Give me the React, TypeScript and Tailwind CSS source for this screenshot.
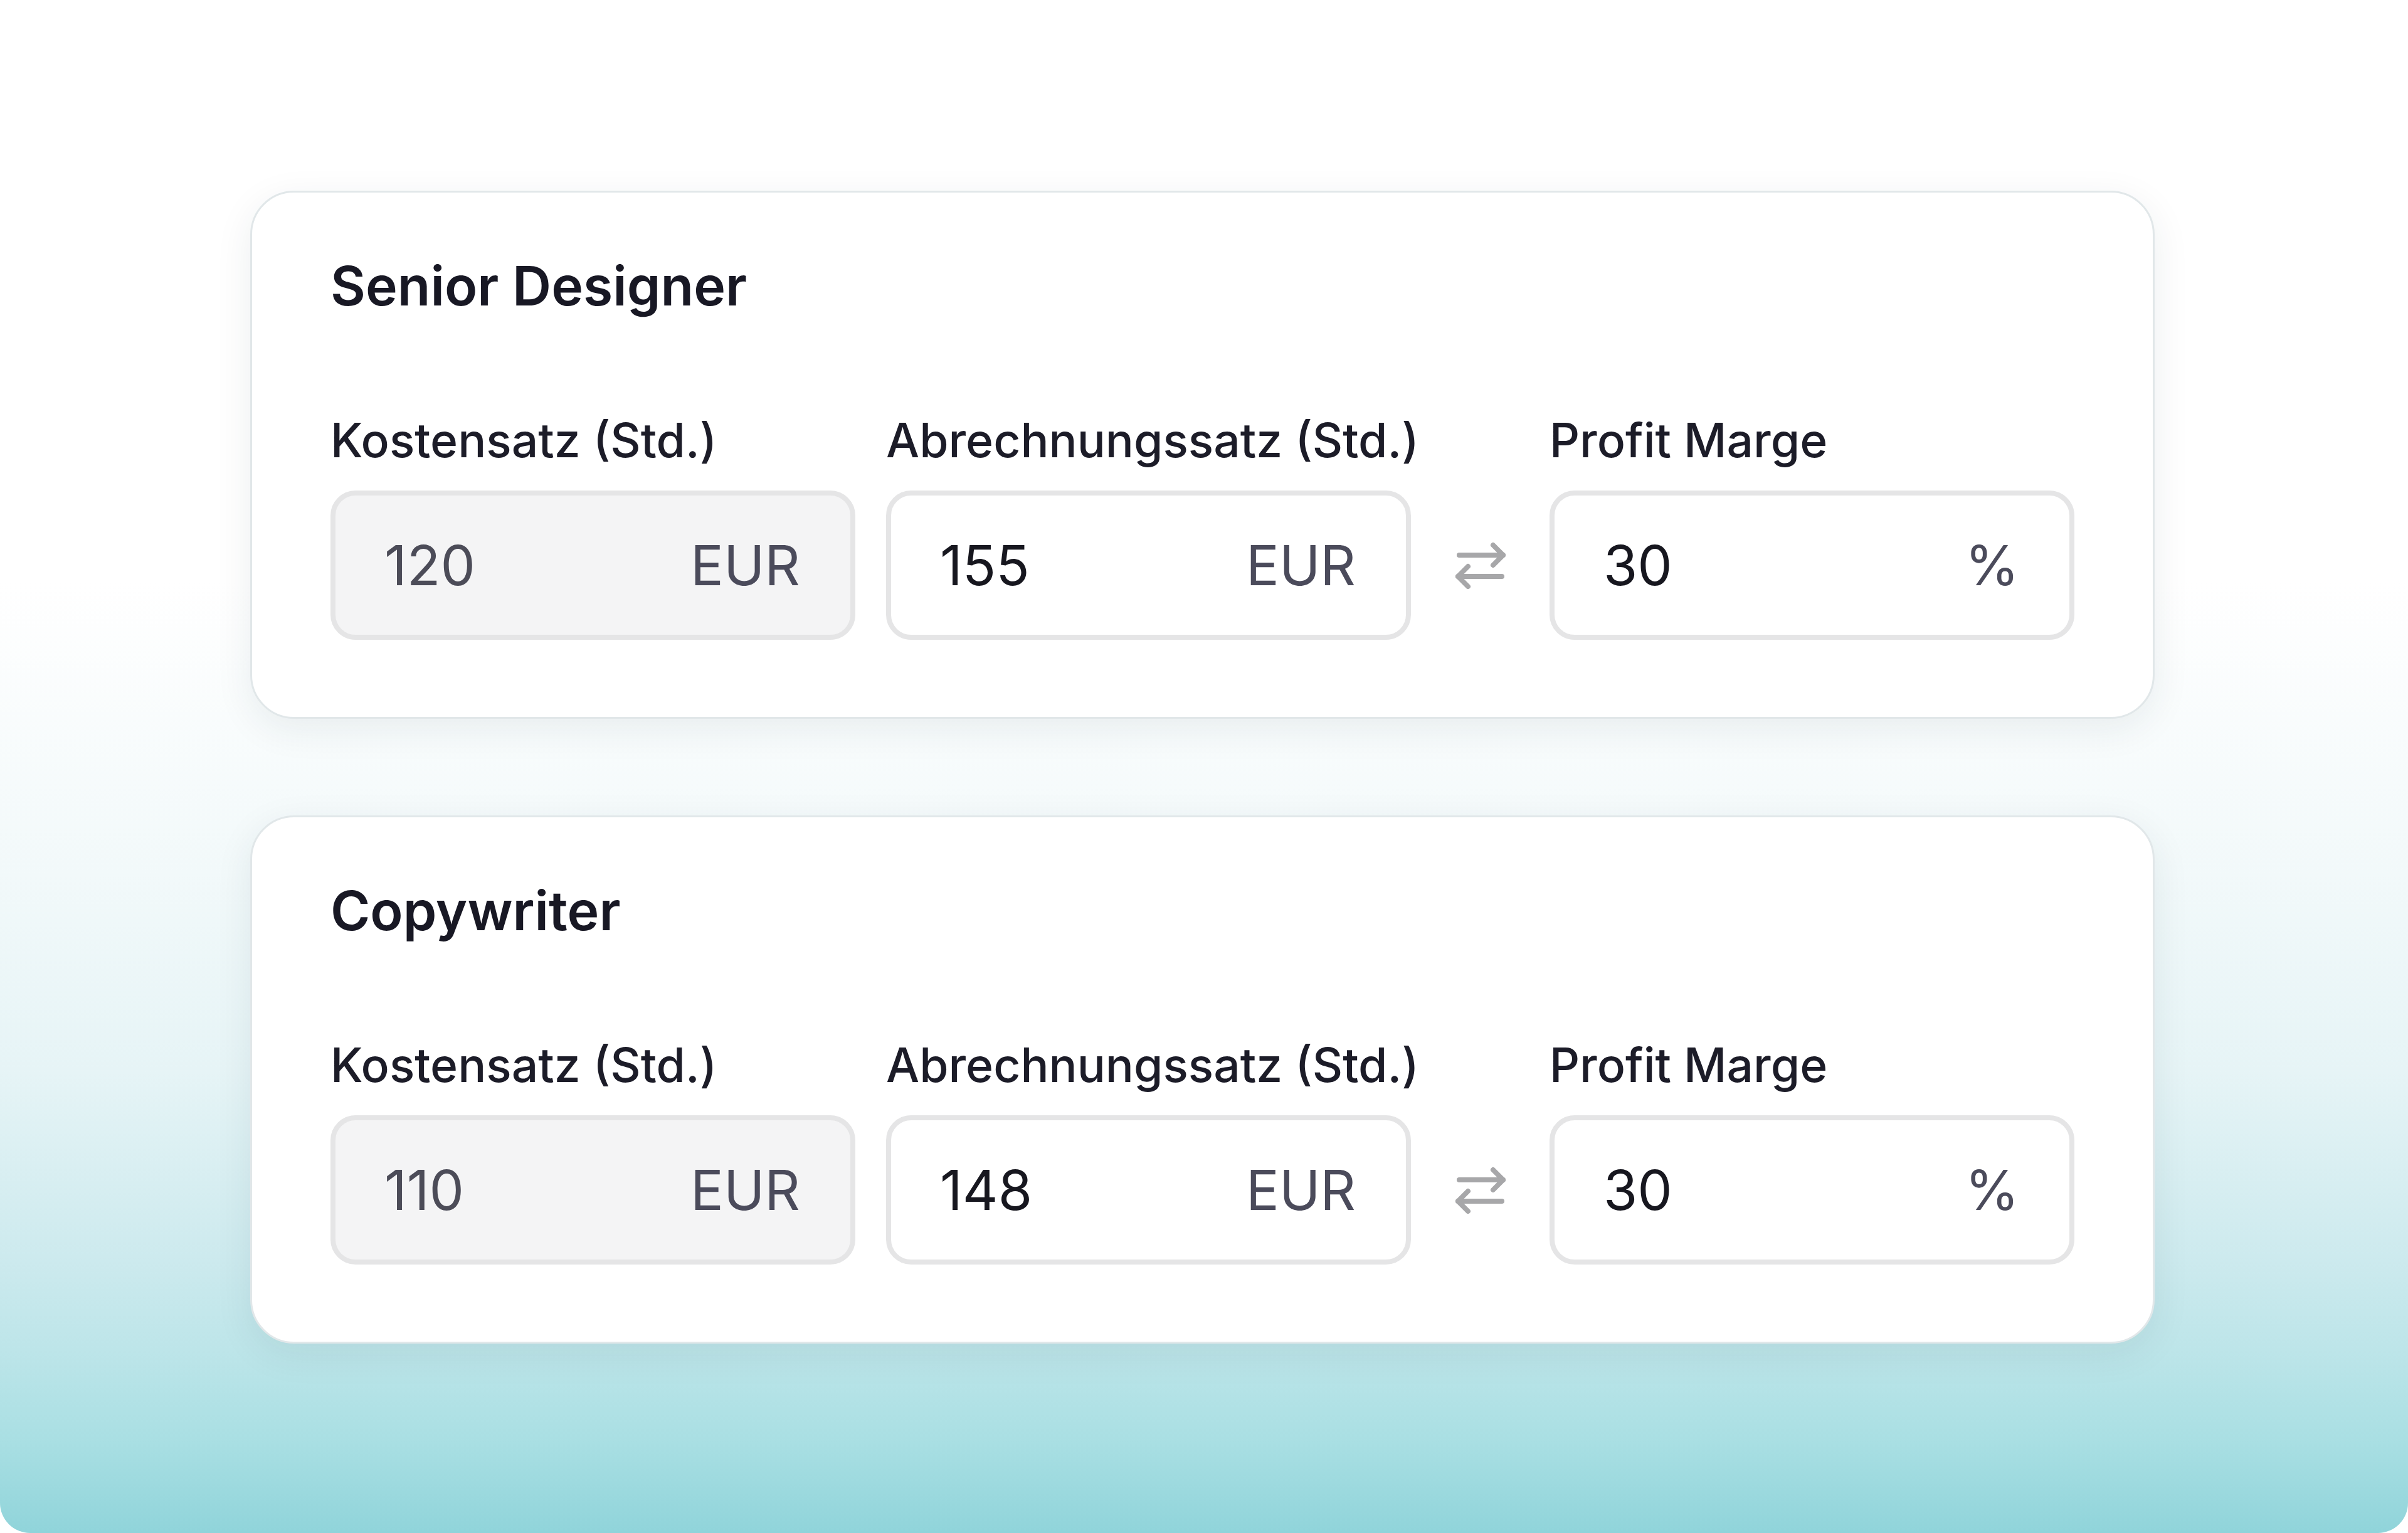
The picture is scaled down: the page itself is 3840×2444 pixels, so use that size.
import React from "react";

type Row = { title: string; cost: string; bill: string; margin: string };

const rows: Row[] = [
  { title: "Senior Designer", cost: "120", bill: "155", margin: "30" },
  { title: "Copywriter", cost: "110", bill: "148", margin: "30" },
];

function SwapIcon() {
  return (
    <svg width="84" height="76" viewBox="0 0 84 76" fill="none" stroke="#a7a7a9" strokeWidth="8" strokeLinecap="round" strokeLinejoin="round">
      <path d="M8 22 H78" />
      <path d="M62 6 L78 22 L62 38" />
      <path d="M6 56 H76" />
      <path d="M22 40 L6 56 L22 72" />
    </svg>
  );
}

function Field({ label, value, unit, muted }: { label: string; value: string; unit: string; muted?: boolean }) {
  return (
    <div className="flex w-[837px] shrink-0 flex-col">
      <div className="whitespace-nowrap text-[75px] font-medium leading-none text-[#1c1c28]">{label}</div>
      <div
        className={
          muted
            ? "mt-[43px] flex h-[238px] items-center justify-between rounded-[40px] border-[8px] border-[#e5e5e6] bg-[#f4f4f5] pl-[78px] pr-[80px]"
            : "mt-[43px] flex h-[238px] items-center justify-between rounded-[40px] border-[8px] border-[#e5e5e6] bg-white pl-[78px] pr-[80px]"
        }
      >
        <span className={muted ? "text-[88px] leading-none text-[#4c4c58]" : "text-[88px] leading-none text-[#17171f]"}>{value}</span>
        <span className="text-[88px] leading-none text-[#4b4b5b]">{unit}</span>
      </div>
    </div>
  );
}

function Card({ row }: { row: Row }) {
  return (
    <div className="h-[842px] w-[3037px] rounded-[70px] border-[3px] border-[#e1e7e9] bg-white px-[125px] pt-[106px] shadow-[0_16px_60px_rgba(30,50,70,0.08)]">
      <div className="whitespace-nowrap text-[86px] font-semibold leading-none text-[#181824]">{row.title}</div>
      <div className="mt-[165px] flex items-end">
        <Field label="Kostensatz (Std.)" value={row.cost} unit="EUR" muted />
        <div className="w-[49px] shrink-0" />
        <Field label="Abrechnungssatz (Std.)" value={row.bill} unit="EUR" />
        <div className="flex h-[238px] w-[221px] shrink-0 items-center justify-center">
          <SwapIcon />
        </div>
        <Field label="Profit Marge" value={row.margin} unit="%" />
      </div>
    </div>
  );
}

export default function App() {
  return (
    <div className="h-[2444px] w-[3840px] bg-white" style={{ fontFamily: "Inter, 'Noto Sans', sans-serif" }}>
      <div className="flex h-full w-full flex-col gap-[154px] rounded-[48px] bg-[linear-gradient(180deg,#ffffff_0%,#ffffff_38%,#f2f9fa_57%,#e6f4f6_70%,#cdeaee_82%,#bde5e9_88%,#a9dfe3_94%,#90d4da_100%)] pl-[399px] pt-[304px]">
        {rows.map((r) => (
          <Card key={r.title} row={r} />
        ))}
      </div>
    </div>
  );
}
